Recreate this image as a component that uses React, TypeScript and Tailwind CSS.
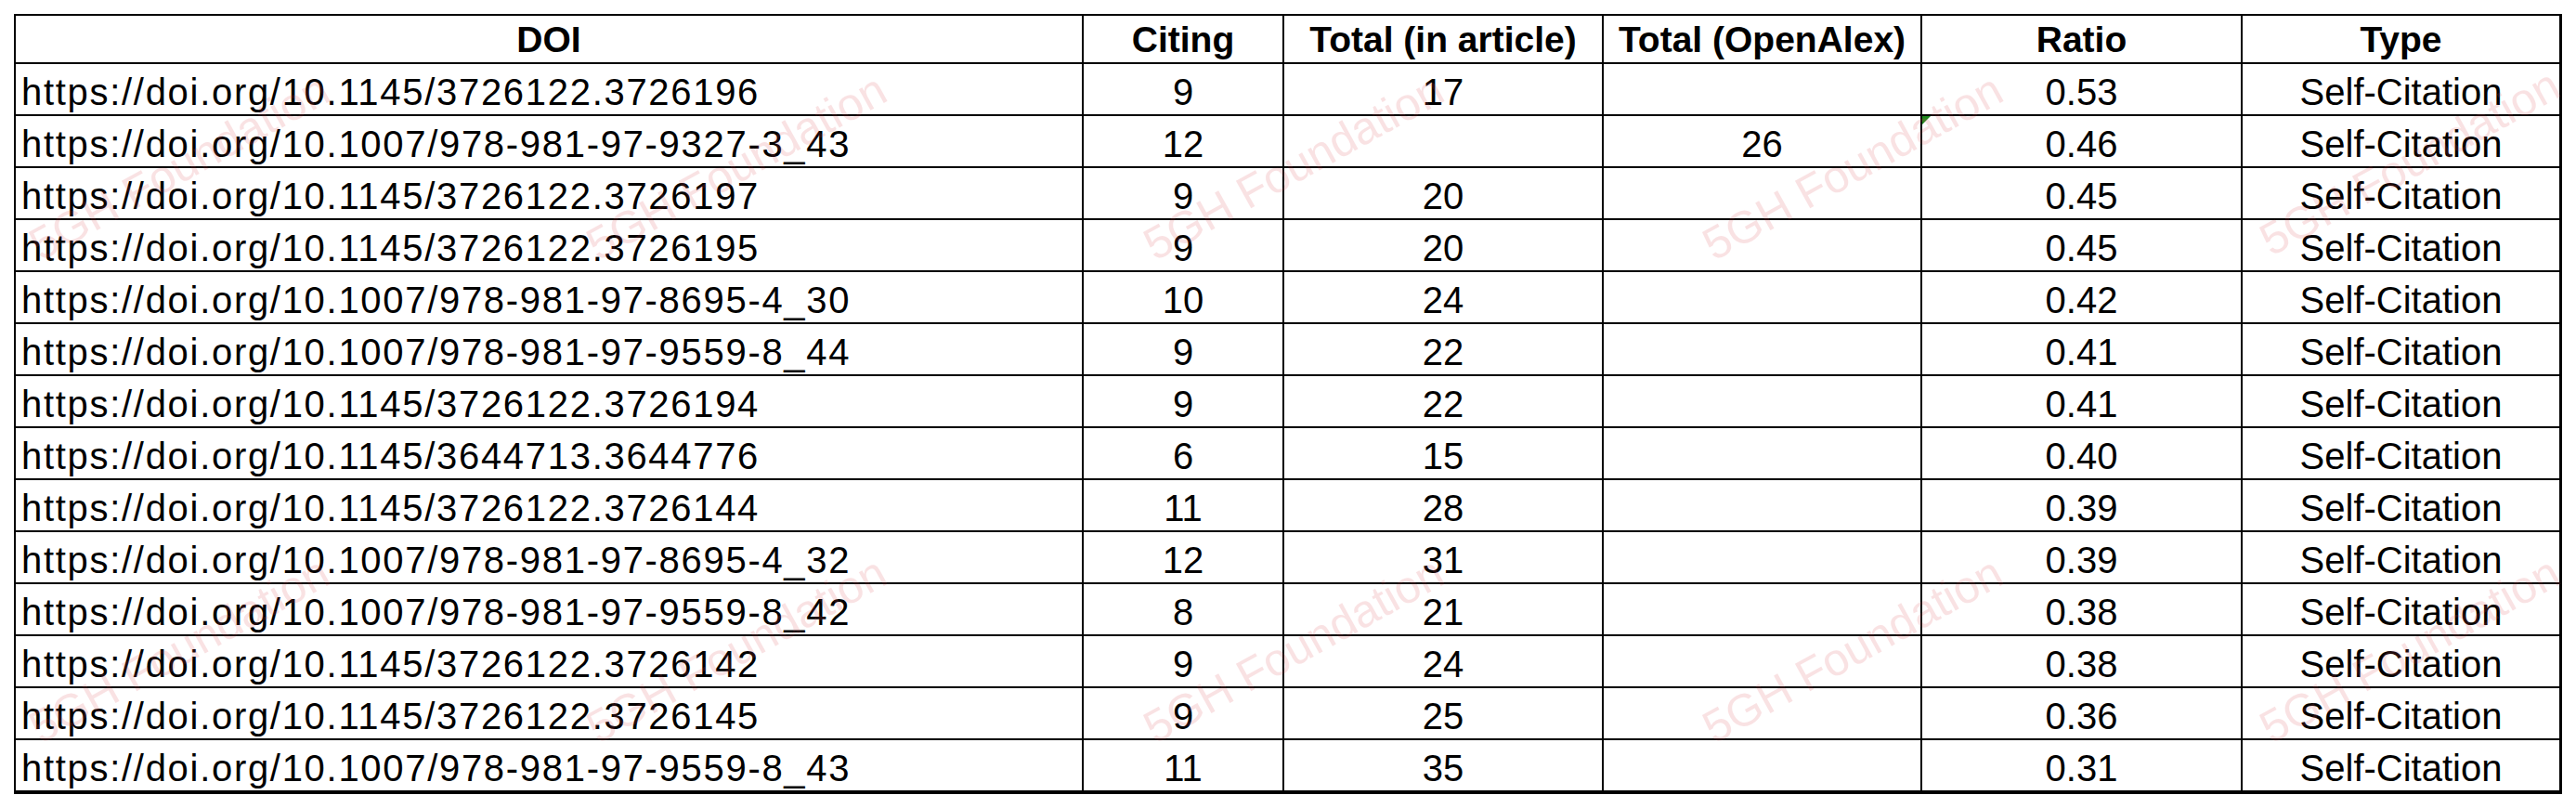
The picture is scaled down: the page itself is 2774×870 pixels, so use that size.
import React from 'react'

// rows of the self-citation sheet
const ROWS = [
  { doi: 'https://doi.org/10.1145/3726122.3726196', citing: '9', article: '17', openalex: '', ratio: '0.53' },
  { doi: 'https://doi.org/10.1007/978-981-97-9327-3_43', citing: '12', article: '', openalex: '26', ratio: '0.46', flag: true },
  { doi: 'https://doi.org/10.1145/3726122.3726197', citing: '9', article: '20', openalex: '', ratio: '0.45' },
  { doi: 'https://doi.org/10.1145/3726122.3726195', citing: '9', article: '20', openalex: '', ratio: '0.45' },
  { doi: 'https://doi.org/10.1007/978-981-97-8695-4_30', citing: '10', article: '24', openalex: '', ratio: '0.42' },
  { doi: 'https://doi.org/10.1007/978-981-97-9559-8_44', citing: '9', article: '22', openalex: '', ratio: '0.41' },
  { doi: 'https://doi.org/10.1145/3726122.3726194', citing: '9', article: '22', openalex: '', ratio: '0.41' },
  { doi: 'https://doi.org/10.1145/3644713.3644776', citing: '6', article: '15', openalex: '', ratio: '0.40' },
  { doi: 'https://doi.org/10.1145/3726122.3726144', citing: '11', article: '28', openalex: '', ratio: '0.39' },
  { doi: 'https://doi.org/10.1007/978-981-97-8695-4_32', citing: '12', article: '31', openalex: '', ratio: '0.39' },
  { doi: 'https://doi.org/10.1007/978-981-97-9559-8_42', citing: '8', article: '21', openalex: '', ratio: '0.38' },
  { doi: 'https://doi.org/10.1145/3726122.3726142', citing: '9', article: '24', openalex: '', ratio: '0.38' },
  { doi: 'https://doi.org/10.1145/3726122.3726145', citing: '9', article: '25', openalex: '', ratio: '0.36' },
  { doi: 'https://doi.org/10.1007/978-981-97-9559-8_43', citing: '11', article: '35', openalex: '', ratio: '0.31' },
]

const HEADERS = ['DOI', 'Citing', 'Total (in article)', 'Total (OpenAlex)', 'Ratio', 'Type']

// watermark anchors (center points)
const MARKS = [
  'left-[193px] top-[180px]', 'left-[793px] top-[180px]', 'left-[1393px] top-[180px]', 'left-[1995px] top-[180px]', 'left-[2595px] top-[175px]',
  'left-[193px] top-[700px]', 'left-[793px] top-[700px]', 'left-[1393px] top-[700px]', 'left-[1995px] top-[700px]', 'left-[2595px] top-[700px]',
]

function Cell({ children, last, lastRow, left, className = '' }: { children?: React.ReactNode, last?: boolean, lastRow?: boolean, left?: boolean, className?: string }) {
  return (
    <div
      className={`relative flex items-end pb-px leading-[46px] border-black ${last ? '' : 'border-r-2'} ${lastRow ? 'h-[54px]' : 'h-[56px] border-b-2'} ${left ? 'justify-start pl-[6px] tracking-[1.7px]' : 'justify-center'} ${className}`}
    >
      {children}
    </div>
  )
}

export default function App() {
  return (
    <div className="relative w-[2774px] h-[870px] bg-white overflow-hidden font-['Liberation_Sans',Arial,sans-serif] text-black">
      <div className="pl-[15px] pt-[15px]">
        <div className="w-[2744px] border-l-2 border-t-2 border-r-[3px] border-b-[4px] border-black">
          {/* header */}
          <div className="grid grid-cols-[1150px_216px_344px_343px_345px_341px]">
            {HEADERS.map((h, i) => (
              <div
                key={h}
                className={`h-[52px] flex items-end justify-center pb-[2px] border-b-2 border-black text-[39px] leading-[44px] font-bold ${i < 5 ? 'border-r-2' : ''}`}
              >
                {h}
              </div>
            ))}
          </div>

          {/* data rows */}
          {ROWS.map((r, idx) => {
            const lastRow = idx === ROWS.length - 1
            return (
              <div key={idx} className="grid grid-cols-[1150px_216px_344px_343px_345px_341px] text-[40px]">
                <Cell left lastRow={lastRow}>{r.doi}</Cell>
                <Cell lastRow={lastRow}>{r.citing}</Cell>
                <Cell lastRow={lastRow}>{r.article}</Cell>
                <Cell lastRow={lastRow}>{r.openalex}</Cell>
                <Cell lastRow={lastRow}>
                  {r.flag && (
                    <span className="absolute left-0 top-0 w-0 h-0 border-t-[9px] border-t-[#1f8a1f] border-r-[9px] border-r-transparent" />
                  )}
                  {r.ratio}
                </Cell>
                <Cell last lastRow={lastRow}>Self-Citation</Cell>
              </div>
            )
          })}
        </div>
      </div>

      {/* watermark */}
      <div className="absolute inset-0 pointer-events-none">
        {MARKS.map((pos, i) => (
          <span
            key={i}
            className={`absolute ${pos} -translate-x-1/2 -translate-y-1/2 rotate-[-29deg] whitespace-nowrap text-[49px] leading-none text-[#e0505a] opacity-[0.16] font-['Liberation_Sans',Arial,sans-serif]`}
          >
            5GH Foundation
          </span>
        ))}
      </div>
    </div>
  )
}
